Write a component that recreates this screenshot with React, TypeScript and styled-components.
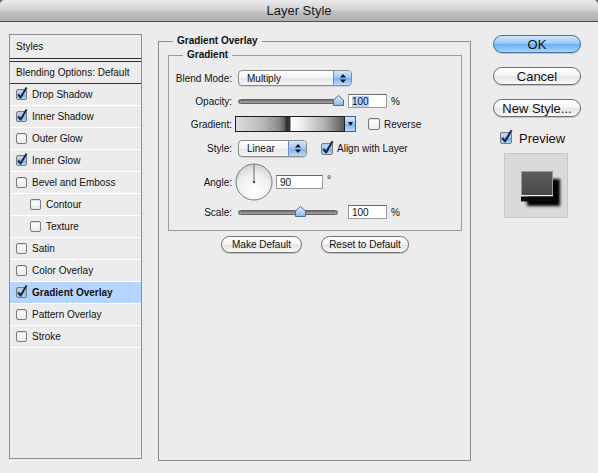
import React from 'react'
import styled, { createGlobalStyle } from 'styled-components'

const GlobalStyle = createGlobalStyle`
  html, body {
    margin: 0;
    padding: 0;
  }
  body {
    width: 598px;
    height: 473px;
    overflow: hidden;
    background: #6a6a6a;
    font-family: "Liberation Sans", Arial, sans-serif;
    color: #111;
  }
`

const Window = styled.div`
  width: 598px;
  height: 473px;
  display: flex;
  flex-direction: column;
  background: #ececec;
  border-radius: 5px 5px 0 0;
  overflow: hidden;
`

const TitleBar = styled.div`
  height: 21px;
  flex: none;
  border-bottom: 1px solid #4f4f4f;
  background: linear-gradient(#ebebeb, #d4d4d4 45%, #c2c2c2 55%, #afafaf);
  display: flex;
  align-items: center;
  justify-content: center;
  font-size: 13px;
  color: #1a1a1a;
`

const Content = styled.div`
  display: flex;
  align-items: flex-start;
  padding: 12px 0 0 9px;
`

/* left list of effects */

const StylesList = styled.div`
  box-sizing: border-box;
  width: 133px;
  height: 425px;
  flex: none;
  border: 1px solid #8c8c8c;
  font-size: 10px;
`

const ListHeader = styled.div`
  height: 23px;
  display: flex;
  align-items: center;
  padding-left: 6px;
  border-bottom: 1px solid #333;
`

const BlendingRow = styled.div`
  height: 21px;
  margin-top: 2px;
  display: flex;
  align-items: center;
  padding-left: 6px;
  border-top: 1px solid #333;
  border-bottom: 1px solid #333;
`

const ListItem = styled.div<{ $indent?: boolean; $selected?: boolean }>`
  height: 21px;
  display: flex;
  align-items: center;
  gap: 5px;
  padding-left: ${p => (p.$indent ? 20 : 6)}px;
  border-bottom: 1px solid #fff;
  background: ${p => (p.$selected ? '#b5d5ff' : 'transparent')};
  font-weight: ${p => (p.$selected ? 'bold' : 'normal')};
`

/* checkbox */

const Box = styled.span<{ $checked?: boolean; $size: number }>`
  position: relative;
  flex: none;
  box-sizing: border-box;
  width: ${p => p.$size}px;
  height: ${p => p.$size}px;
  border: 1px solid #7a7a7a;
  border-radius: 2px;
  background: ${p =>
    p.$checked
      ? 'linear-gradient(#d3e5fa, #9cc2ee 50%, #7eaee6 51%, #b6d5f7)'
      : 'linear-gradient(#fefefe, #ececec)'};
  box-shadow: inset 0 1px 1px rgba(0, 0, 0, 0.12);
`

const CheckMark = styled.svg`
  position: absolute;
  left: -1px;
  top: -1px;
  overflow: visible;
`

const CheckBox = ({ checked, size = 11 }: { checked?: boolean; size?: number }) => (
  <Box $checked={checked} $size={size}>
    {checked && (
      <CheckMark width={size} height={size} viewBox="0 0 11 11">
        <path d="M2.2 5.4 L4.6 8.6 L10.6 -1.6" fill="none" stroke="#162a4e" strokeWidth="2" strokeLinejoin="round" />
      </CheckMark>
    )}
  </Box>
)

/* group boxes */

const OuterGroup = styled.fieldset`
  box-sizing: border-box;
  flex: none;
  width: 313px;
  height: 427px;
  margin: 0 0 0 16px;
  padding: 0 8px 0 9px;
  border: 1px solid #8a8a8a;
  min-width: 0;
  font-size: 10px;
`

const InnerGroup = styled.fieldset`
  margin: 0;
  padding: 8px 0 11px 0;
  border: 1px solid #9c9c9c;
  min-width: 0;
`

const Legend = styled.legend<{ $offset: number }>`
  margin-left: ${p => p.$offset}px;
  padding: 0 4px 0 4px;
  font-weight: bold;
  font-size: 10px;
  line-height: 14px;
`

const FormRow = styled.div<{ $h: number; $mt: number }>`
  display: flex;
  align-items: center;
  height: ${p => p.$h}px;
  margin-top: ${p => p.$mt}px;
`

const FieldLabel = styled.span`
  flex: none;
  width: 63px;
  margin-right: 6px;
  text-align: right;
`

const SideLabel = styled.span`
  margin-left: 4px;
`

/* popup buttons */

const Popup = styled.div<{ $w: number; $h: number }>`
  box-sizing: border-box;
  flex: none;
  width: ${p => p.$w}px;
  height: ${p => p.$h}px;
  display: flex;
  border: 1px solid #8a8a8a;
  border-radius: 4px;
  background: linear-gradient(#ffffff, #f3f3f3 50%, #e6e6e6 51%, #f6f6f6);
  box-shadow: 0 1px 1px rgba(0, 0, 0, 0.12);
  overflow: hidden;
`

const PopupText = styled.span`
  flex: 1;
  display: flex;
  align-items: center;
  padding-left: 8px;
`

const Stepper = styled.span`
  flex: none;
  width: 17px;
  display: flex;
  align-items: center;
  justify-content: center;
  border-left: 1px solid #6c8fc2;
  background: linear-gradient(#d6e8fc, #9dc6f2 50%, #76afee 51%, #bcdcfb);
`

const UpDown = () => (
  <svg width="6" height="9" viewBox="0 0 6 9">
    <path d="M3 0 L6 3.5 L0 3.5 Z M0 5.5 L6 5.5 L3 9 Z" fill="#111" />
  </svg>
)

const PopupButton = ({ value, w, h }: { value: string; w: number; h: number }) => (
  <Popup $w={w} $h={h}>
    <PopupText>{value}</PopupText>
    <Stepper>
      <UpDown />
    </Stepper>
  </Popup>
)

/* slider */

const Slider = styled.div`
  position: relative;
  flex: none;
  width: 110px;
  height: 14px;
  display: flex;
  align-items: center;
`

const Track = styled.div`
  box-sizing: border-box;
  width: 100px;
  height: 5px;
  border-radius: 3px;
  border: 1px solid #5f5f5f;
  background: linear-gradient(#6e6e6e, #a9a9a9);
`

const Thumb = styled.svg`
  position: absolute;
  top: 1px;
`

const SliderControl = ({ pos }: { pos: number }) => (
  <Slider>
    <Track />
    <Thumb width="11" height="11" viewBox="0 0 11 11" style={{ left: pos * 100 - 5.5 }}>
      <defs>
        <linearGradient id="thumbFill" x1="0" y1="0" x2="0" y2="1">
          <stop offset="0" stopColor="#e4effb" />
          <stop offset="1" stopColor="#8db5e6" />
        </linearGradient>
      </defs>
      <path d="M5.5 0.5 L10.5 5 L10.5 10.5 L0.5 10.5 L0.5 5 Z" fill="url(#thumbFill)" stroke="#4b6e9c" />
    </Thumb>
  </Slider>
)

/* text fields */

const NumberField = styled.div<{ $w: number }>`
  box-sizing: border-box;
  flex: none;
  width: ${p => p.$w}px;
  height: 14px;
  display: flex;
  align-items: center;
  padding-left: 3px;
  background: #fff;
  border: 1px solid #9a9a9a;
  border-top-color: #6a6a6a;
`

const Selected = styled.span`
  background: #b5d5ff;
`

const Unit = styled.span<{ $raise?: boolean }>`
  margin-left: 4px;
  align-self: ${p => (p.$raise ? 'flex-start' : 'center')};
  margin-top: ${p => (p.$raise ? 11 : 0)}px;
`

/* gradient picker */

const GradientPicker = styled.div`
  flex: none;
  display: flex;
  height: 16px;
  margin-left: -3px;
`

const Swatch = styled.div`
  box-sizing: border-box;
  width: 110px;
  height: 16px;
  border: 1px solid #1e1e1e;
  background: linear-gradient(
    to right,
    #dedede 0%,
    #b8b8b8 25%,
    #8a8a8a 40%,
    #5a5a5a 45%,
    #2c2c2c 47%,
    #3a3a3a 50%,
    #ffffff 51%,
    #f0f0f0 60%,
    #b0b0b0 82%,
    #5a5a5a 100%
  );
`

const SwatchArrow = styled.div`
  box-sizing: border-box;
  width: 11px;
  height: 16px;
  display: flex;
  align-items: center;
  justify-content: center;
  border: 1px solid #3c5f92;
  border-left: none;
  background: linear-gradient(#d6e8fc, #9dc6f2 50%, #76afee 51%, #bcdcfb);
`

const CheckField = styled.div<{ $ml: number }>`
  display: flex;
  align-items: center;
  margin-left: ${p => p.$ml}px;
`

/* angle dial */

const Dial = styled.svg`
  flex: none;
  margin-left: -3px;
`

const AngleDial = () => (
  <Dial width="38" height="38" viewBox="0 0 38 38">
    <defs>
      <radialGradient id="dialFill" cx="0.5" cy="0.75" r="0.75">
        <stop offset="0" stopColor="#ffffff" />
        <stop offset="0.6" stopColor="#f0f0f0" />
        <stop offset="1" stopColor="#cfcfcf" />
      </radialGradient>
    </defs>
    <circle cx="19" cy="19" r="18" fill="url(#dialFill)" stroke="#7c7c7c" />
    <line x1="19" y1="19" x2="19" y2="1.5" stroke="#6a6a6a" strokeWidth="1" />
    <circle cx="19" cy="19" r="1.3" fill="#555" />
  </Dial>
)

/* push buttons */

const ButtonRow = styled.div`
  display: flex;
  justify-content: center;
  gap: 19px;
  margin-top: 5px;
`

const PushButton = styled.div<{ $w: number; $h: number; $primary?: boolean; $size: number }>`
  box-sizing: border-box;
  flex: none;
  width: ${p => p.$w}px;
  height: ${p => p.$h}px;
  display: flex;
  align-items: center;
  justify-content: center;
  border-radius: ${p => p.$h / 2}px;
  border: 1px solid ${p => (p.$primary ? '#45709f' : '#6e6e6e')};
  background: ${p =>
    p.$primary
      ? 'linear-gradient(#cfe6fc, #9ccbf5 45%, #6cafef 55%, #a6d6fc)'
      : 'linear-gradient(#ffffff, #f5f5f5 45%, #e5e5e5 55%, #f9f9f9)'};
  box-shadow: 0 1px 1px rgba(0, 0, 0, 0.18);
  font-size: ${p => p.$size}px;
  color: #111;
`

/* right column */

const SideColumn = styled.div`
  flex: none;
  width: 88px;
  margin-left: 22px;
  padding-top: 1px;
  display: flex;
  flex-direction: column;
  gap: 14px;
`

const PreviewToggle = styled.div`
  height: 12px;
  margin: 1px 0 0 7px;
  display: flex;
  align-items: center;
  gap: 7px;
  font-size: 13px;
`

const PreviewBox = styled.div`
  box-sizing: border-box;
  width: 64px;
  height: 65px;
  margin: -5px 0 0 11px;
  background: #dadada;
  border: 1px solid #c8c8c8;
`

const PreviewArt = () => (
  <svg width="62" height="63" viewBox="0 0 62 63">
    <defs>
      <filter id="shadowBlur" x="-30%" y="-30%" width="160%" height="160%">
        <feGaussianBlur stdDeviation="1.8" />
      </filter>
      <linearGradient id="squareFill" x1="0" y1="0" x2="0" y2="1">
        <stop offset="0" stopColor="#5c5c5c" />
        <stop offset="1" stopColor="#474747" />
      </linearGradient>
    </defs>
    <rect x="22" y="25" width="33" height="27" fill="#000" filter="url(#shadowBlur)" />
    <rect x="16.5" y="17.5" width="31" height="24" fill="url(#squareFill)" stroke="#9a9a9a" />
    <rect x="16" y="41" width="32" height="1.5" fill="#f2f2f2" />
    <rect x="16" y="42.5" width="32" height="5" fill="#0a0a0a" />
  </svg>
)

const effects: { label: string; checked?: boolean; indent?: boolean; selected?: boolean }[] = [
  { label: 'Drop Shadow', checked: true },
  { label: 'Inner Shadow', checked: true },
  { label: 'Outer Glow' },
  { label: 'Inner Glow', checked: true },
  { label: 'Bevel and Emboss' },
  { label: 'Contour', indent: true },
  { label: 'Texture', indent: true },
  { label: 'Satin' },
  { label: 'Color Overlay' },
  { label: 'Gradient Overlay', checked: true, selected: true },
  { label: 'Pattern Overlay' },
  { label: 'Stroke' },
]

export default function App() {
  return (
    <Window>
      <GlobalStyle />
      <TitleBar>Layer Style</TitleBar>
      <Content>
        <StylesList>
          <ListHeader>Styles</ListHeader>
          <BlendingRow>Blending Options: Default</BlendingRow>
          {effects.map(e => (
            <ListItem key={e.label} $indent={e.indent} $selected={e.selected}>
              <CheckBox checked={e.checked} />
              {e.label}
            </ListItem>
          ))}
        </StylesList>

        <OuterGroup>
          <Legend $offset={5}>Gradient Overlay</Legend>
          <InnerGroup>
            <Legend $offset={14}>Gradient</Legend>
            <FormRow $h={16} $mt={0}>
              <FieldLabel>Blend Mode:</FieldLabel>
              <PopupButton value="Multiply" w={114} h={16} />
            </FormRow>
            <FormRow $h={14} $mt={8}>
              <FieldLabel>Opacity:</FieldLabel>
              <SliderControl pos={1} />
              <NumberField $w={39}>
                <Selected>100</Selected>
              </NumberField>
              <Unit>%</Unit>
            </FormRow>
            <FormRow $h={16} $mt={8}>
              <FieldLabel>Gradient:</FieldLabel>
              <GradientPicker>
                <Swatch />
                <SwatchArrow>
                  <svg width="5" height="4" viewBox="0 0 5 4">
                    <path d="M0 0 L5 0 L2.5 4 Z" fill="#111" />
                  </svg>
                </SwatchArrow>
              </GradientPicker>
              <CheckField $ml={12}>
                <CheckBox size={12} />
                <SideLabel>Reverse</SideLabel>
              </CheckField>
            </FormRow>
            <FormRow $h={17} $mt={8}>
              <FieldLabel>Style:</FieldLabel>
              <PopupButton value="Linear" w={69} h={17} />
              <CheckField $ml={14}>
                <CheckBox size={12} checked />
                <SideLabel>Align with Layer</SideLabel>
              </CheckField>
            </FormRow>
            <FormRow $h={38} $mt={6}>
              <FieldLabel>Angle:</FieldLabel>
              <AngleDial />
              <NumberField $w={47} style={{ marginLeft: 3 }}>90</NumberField>
              <Unit $raise>°</Unit>
            </FormRow>
            <FormRow $h={14} $mt={4}>
              <FieldLabel>Scale:</FieldLabel>
              <SliderControl pos={0.62} />
              <NumberField $w={39}>100</NumberField>
              <Unit>%</Unit>
            </FormRow>
          </InnerGroup>
          <ButtonRow>
            <PushButton $w={81} $h={17} $size={10}>Make Default</PushButton>
            <PushButton $w={88} $h={17} $size={10}>Reset to Default</PushButton>
          </ButtonRow>
        </OuterGroup>

        <SideColumn>
          <PushButton $w={88} $h={18} $size={13} $primary>OK</PushButton>
          <PushButton $w={88} $h={18} $size={13}>Cancel</PushButton>
          <PushButton $w={88} $h={18} $size={13}>New Style...</PushButton>
          <PreviewToggle>
            <CheckBox size={12} checked />
            Preview
          </PreviewToggle>
          <PreviewBox>
            <PreviewArt />
          </PreviewBox>
        </SideColumn>
      </Content>
    </Window>
  )
}
